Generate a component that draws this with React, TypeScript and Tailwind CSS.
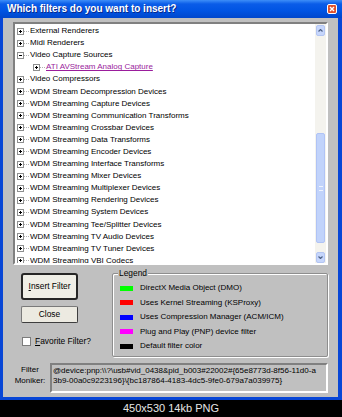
const treeItems = [
  { label: 'External Renderers' },
  { label: 'Midi Renderers' },
  { label: 'Video Capture Sources', open: true },
  { label: 'ATI AVStream Analog Capture', child: true },
  { label: 'Video Compressors' },
  { label: 'WDM Stream Decompression Devices' },
  { label: 'WDM Streaming Capture Devices' },
  { label: 'WDM Streaming Communication Transforms' },
  { label: 'WDM Streaming Crossbar Devices' },
  { label: 'WDM Streaming Data Transforms' },
  { label: 'WDM Streaming Encoder Devices' },
  { label: 'WDM Streaming Interface Transforms' },
  { label: 'WDM Streaming Mixer Devices' },
  { label: 'WDM Streaming Multiplexer Devices' },
  { label: 'WDM Streaming Rendering Devices' },
  { label: 'WDM Streaming System Devices' },
  { label: 'WDM Streaming Tee/Splitter Devices' },
  { label: 'WDM Streaming TV Audio Devices' },
  { label: 'WDM Streaming TV Tuner Devices' },
  { label: 'WDM Streaming VBI Codecs' },
]

const legend = [
  { color: 'bg-[#00ff00]', label: 'DirectX Media Object (DMO)' },
  { color: 'bg-[#ff0000]', label: 'Uses Kernel Streaming (KSProxy)' },
  { color: 'bg-[#0000ff]', label: 'Uses Compression Manager (ACM/ICM)' },
  { color: 'bg-[#ff00ff]', label: 'Plug and Play (PNP) device filter' },
  { color: 'bg-[#000000]', label: 'Default filter color' },
]

function Expander({ open }: { open?: boolean }) {
  return (
    <svg width="7" height="7" viewBox="0 0 7 7" className="shrink-0">
      <rect x="0.5" y="0.5" width="6" height="6" fill="#fff" stroke="#8e8f8f" />
      <path d="M2 3.5h3" stroke="#000" strokeWidth="1" />
      {!open && <path d="M3.5 2v3" stroke="#000" strokeWidth="1" />}
    </svg>
  )
}

function ScrollButton({ up }: { up?: boolean }) {
  return (
    <div className="mx-[1px] h-[11px] rounded-[2px] border border-[#b3c5f2] bg-[#c6d6fc] flex items-center justify-center">
      <svg width="5" height="3" viewBox="0 0 5 3">
        <path d={up ? 'M0.5 2.5L2.5 0.5L4.5 2.5' : 'M0.5 0.5L2.5 2.5L4.5 0.5'} fill="none" stroke="#4d6185" strokeWidth="1.2" />
      </svg>
    </div>
  )
}

export default function App() {
  return (
    <div className="w-[342px] h-[417px] bg-black flex flex-col font-['Liberation_Sans',Arial,sans-serif] text-[8px] text-black">
      {/* Window */}
      <div className="h-[400px] flex flex-col bg-[#0846d6]">
        {/* Title bar */}
        <div className="h-[18px] shrink-0 flex items-center justify-between pl-[7px] pr-[5px] bg-[linear-gradient(to_bottom,#3d8ef8,#0a5ce8_22%,#0054e3_60%,#0047cc)]">
          <span className="text-white font-bold text-[10px] leading-none [text-shadow:1px_1px_0_#0a2a8a]">
            Which filters do you want to insert?
          </span>
          <div className="w-[10px] h-[10px] rounded-[2px] border border-white bg-[#e0502a] flex items-center justify-center">
            <svg width="6" height="6" viewBox="0 0 6 6">
              <path d="M1 1L5 5M5 1L1 5" stroke="#fff" strokeWidth="1.4" />
            </svg>
          </div>
        </div>

        {/* Body */}
        <div className="flex-1 ml-[3px] mr-[4px] mb-[3px] bg-[#c0c0c0] flex flex-col">
          {/* Tree */}
          <div className="mt-[4px] ml-[10px] w-[315px] h-[243px] border-2 border-t-[#808080] border-l-[#808080] border-b-white border-r-white bg-white flex">
            <div className="flex-1 overflow-hidden pt-[1px]">
              {treeItems.map((item) => (
                <div key={item.label} className={`h-[12.1px] flex items-center ${item.child ? 'pl-[18px]' : 'pl-[2px]'}`}>
                  <Expander open={item.open} />
                  <div className="w-[5px] border-t border-dotted border-[#b0b0b0]" />
                  <span
                    className={`ml-[1px] whitespace-nowrap leading-none ${
                      item.child ? 'text-[#9a1d9c] underline' : ''
                    }`}
                  >
                    {item.label}
                  </span>
                </div>
              ))}
            </div>
            {/* Scrollbar */}
            <div className="w-[11px] bg-[#f4f3ee] flex flex-col pt-[1px]">
              <ScrollButton up />
              <div className="h-[97px]" />
              <div className="mx-[1px] h-[110px] rounded-[2px] border border-[#b0c3f5] bg-[#c1d3fb] flex items-center justify-center">
                <div className="w-[4px] h-[5px] border-y border-[#eef3ff]" />
              </div>
              <div className="h-[9px]" />
              <ScrollButton />
            </div>
          </div>

          {/* Buttons and legend */}
          <div className="mt-[8px] h-[84px] flex">
            <div className="ml-[18px] w-[57px] shrink-0 flex flex-col">
              <div className="h-[27px] rounded-[3px] border-2 border-[#262626] bg-[#efeee6] flex items-center justify-center text-[8.4px]">
                <span>
                  <span className="underline">I</span>nsert Filter
                </span>
              </div>
              <div className="mt-[6px] h-[17px] rounded-[2px] border border-[#7a7a7a] border-b-[#3e3e3e] border-r-[#3e3e3e] bg-[#eceae1] flex items-center justify-center text-[8.4px]">
                Close
              </div>
              <div className="mt-[12px] flex items-center">
                <div className="ml-[1px] w-[9px] h-[9px] shrink-0 border border-[#7c7c7c] bg-white" />
                <span className="ml-[4px] text-[8.4px] whitespace-nowrap">
                  <span className="underline">F</span>avorite Filter?
                </span>
              </div>
            </div>

            <div className="relative ml-[34px] w-[216px] shrink-0 border border-[#8e8e8e] rounded-[2px] shadow-[1px_1px_0_#fff,inset_1px_1px_0_#fff] pt-[7px] pl-[7px] flex flex-col">
              <span className="absolute -top-[5px] left-[5px] px-[1px] bg-[#c0c0c0] leading-none text-[8.4px]">Legend</span>
              {legend.map((l) => (
                <div key={l.label} className="h-[14.5px] flex items-center">
                  <div className={`w-[13px] h-[5px] ${l.color}`} />
                  <span className="ml-[7px] whitespace-nowrap leading-none">{l.label}</span>
                </div>
              ))}
            </div>
          </div>

          {/* Moniker */}
          <div className="mt-[6px] h-[30px] flex">
            <div className="ml-[10px] w-[34px] pt-[1px] text-center leading-[11px]">
              <div>Filter</div>
              <div>Moniker:</div>
            </div>
            <div className="ml-[3px] w-[278px] border-2 border-t-[#808080] border-l-[#808080] border-b-white border-r-white pl-[1px] pt-[1px] leading-[10px] overflow-hidden">
              <div className="whitespace-nowrap">{'@device:pnp:\\\\?\\usb#vid_0438&pid_b003#22002#{65e8773d-8f56-11d0-a'}</div>
              <div className="whitespace-nowrap">{'3b9-00a0c9223196}\\{bc187864-4183-4dc5-9fe0-679a7a039975}'}</div>
            </div>
          </div>
        </div>
      </div>

      {/* Caption */}
      <div className="flex-1 flex items-center justify-center text-[11px] text-[#e6e6e6]">450x530 14kb PNG</div>
    </div>
  )
}
